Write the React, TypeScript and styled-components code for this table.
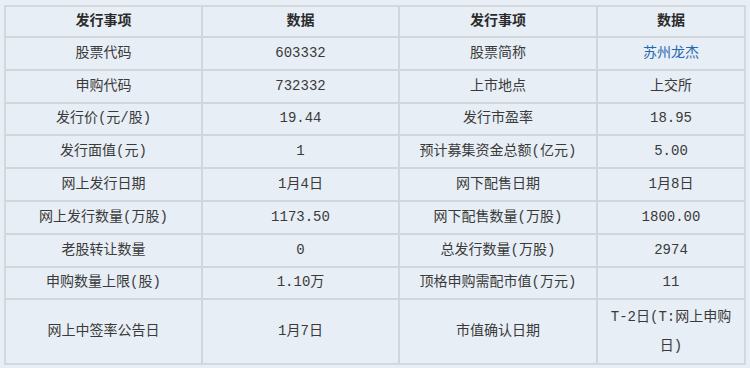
import React from 'react';
import styled, { createGlobalStyle } from 'styled-components';

const GlobalStyle = createGlobalStyle`
    html, body {
        margin: 0;
        background: #e7eef5;
    }
`;

interface Row {
    label1: string,
    value1: string,
    label2: string,
    value2: string,
    link?: boolean,
    tall?: boolean
}

const rows: Row[] = [
    { label1: '股票代码', value1: '603332', label2: '股票简称', value2: '苏州龙杰', link: true },
    { label1: '申购代码', value1: '732332', label2: '上市地点', value2: '上交所' },
    { label1: '发行价(元/股)', value1: '19.44', label2: '发行市盈率', value2: '18.95' },
    { label1: '发行面值(元)', value1: '1', label2: '预计募集资金总额(亿元)', value2: '5.00' },
    { label1: '网上发行日期', value1: '1月4日', label2: '网下配售日期', value2: '1月8日' },
    { label1: '网上发行数量(万股)', value1: '1173.50', label2: '网下配售数量(万股)', value2: '1800.00' },
    { label1: '老股转让数量', value1: '0', label2: '总发行数量(万股)', value2: '2974' },
    { label1: '申购数量上限(股)', value1: '1.10万', label2: '顶格申购需配市值(万元)', value2: '11' },
    { label1: '网上中签率公告日', value1: '1月7日', label2: '市值确认日期', value2: 'T-2日(T:网上申购日)', tall: true },
];

const Page = styled.div`
    padding: 5px 6px 5px 4px;
`;

const Table = styled.table`
    width: 740px;
    table-layout: fixed;
    border-collapse: separate;
    border-spacing: 0;
    border: 1px solid #d6dadd;
    font-family: "Liberation Mono", "Noto Sans CJK SC", monospace;
    font-size: 14px;
    color: #333;
`;

const HeadRow = styled.tr`
    height: 31px;
`;

const BodyRow = styled.tr<{ $tall?: boolean }>`
    height: ${p => p.$tall ? '65px' : '32.8px'};
`;

const Cell = styled.td<{ $head?: boolean }>`
    border: 1px solid #d2d6da;
    padding: 0 8px;
    text-align: center;
    vertical-align: middle;
    line-height: 29px;
    font-weight: ${p => p.$head ? 'bold' : 'normal'};
    color: ${p => p.$head ? '#2b2b2b' : '#3a3a3a'};
`;

const Link = styled.a`
    color: #2767b0;
    text-decoration: none;
`;

const App: React.FC = () => {
    return (
        <Page>
            <GlobalStyle />
            <Table>
                <colgroup>
                    <col style={{ width: 197 }} />
                    <col style={{ width: 197 }} />
                    <col style={{ width: 198 }} />
                    <col style={{ width: 148 }} />
                </colgroup>
                <thead>
                    <HeadRow>
                        <Cell as="th" $head>发行事项</Cell>
                        <Cell as="th" $head>数据</Cell>
                        <Cell as="th" $head>发行事项</Cell>
                        <Cell as="th" $head>数据</Cell>
                    </HeadRow>
                </thead>
                <tbody>
                    {rows.map(r => (
                        <BodyRow key={r.label1} $tall={r.tall}>
                            <Cell>{r.label1}</Cell>
                            <Cell>{r.value1}</Cell>
                            <Cell>{r.label2}</Cell>
                            <Cell>{r.link ? <Link href="/">{r.value2}</Link> : r.value2}</Cell>
                        </BodyRow>
                    ))}
                </tbody>
            </Table>
        </Page>
    )
}

export default App;
